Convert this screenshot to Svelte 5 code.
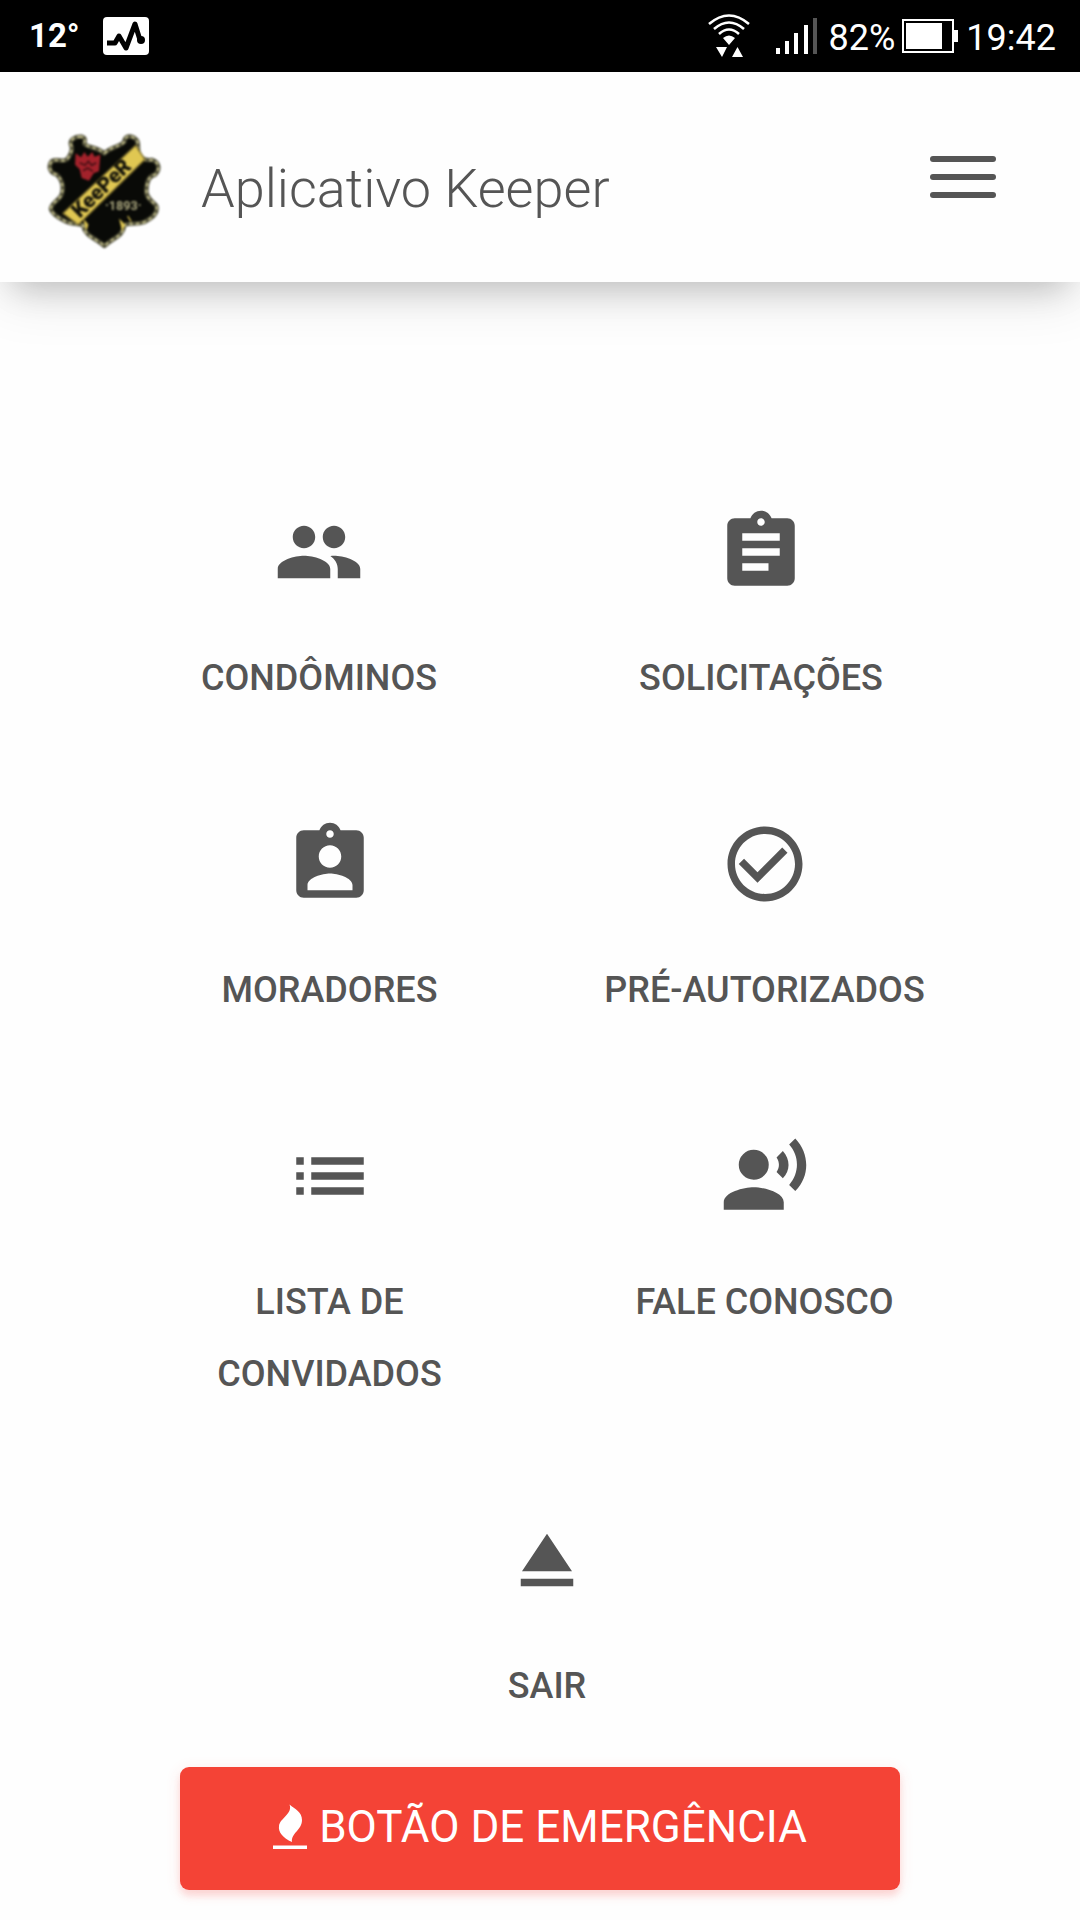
<script>
  const icons = {
    people:
      'M16 11c1.66 0 2.99-1.34 2.99-3S17.66 5 16 5c-1.66 0-3 1.34-3 3s1.34 3 3 3zm-8 0c1.66 0 2.99-1.34 2.99-3S9.66 5 8 5C6.34 5 5 6.34 5 8s1.34 3 3 3zm0 2c-2.33 0-7 1.17-7 3.5V19h14v-2.5c0-2.33-4.67-3.5-7-3.5zm8 0c-.29 0-.62.02-.97.05 1.16.84 1.97 1.97 1.97 3.45V19h6v-2.5c0-2.33-4.67-3.5-7-3.5z',
    assignment:
      'M19 3h-4.18C14.4 1.84 13.3 1 12 1c-1.3 0-2.4.84-2.82 2H5c-1.1 0-2 .9-2 2v14c0 1.1.9 2 2 2h14c1.1 0 2-.9 2-2V5c0-1.1-.9-2-2-2zm-7 0c.55 0 1 .45 1 1s-.45 1-1 1-1-.45-1-1 .45-1 1-1zm2 14H7v-2h7v2zm3-4H7v-2h10v2zm0-4H7V7h10v2z',
    badge:
      'M19 3h-4.18C14.4 1.84 13.3 1 12 1c-1.3 0-2.4.84-2.82 2H5c-1.1 0-2 .9-2 2v14c0 1.1.9 2 2 2h14c1.1 0 2-.9 2-2V5c0-1.1-.9-2-2-2zm-7 0c.55 0 1 .45 1 1s-.45 1-1 1-1-.45-1-1 .45-1 1-1zm0 4c1.66 0 3 1.34 3 3s-1.34 3-3 3-3-1.34-3-3 1.34-3 3-3zm6 12H6v-1.4c0-2 4-3.1 6-3.1s6 1.1 6 3.1V19z',
    check:
      'M16.59 7.58L10 14.17l-3.59-3.58L5 12l5 5 8-8zM12 2C6.48 2 2 6.48 2 12s4.48 10 10 10 10-4.48 10-10S17.52 2 12 2zm0 18c-4.42 0-8-3.58-8-8s3.58-8 8-8 8 3.58 8 8-3.58 8-8 8z',
    list: 'M3 13h2v-2H3v2zm0 4h2v-2H3v2zm0-8h2V7H3v2zm4 4h14v-2H7v2zm0 4h14v-2H7v2zM7 7v2h14V7H7z',
    voice:
      'M9 5a4 4 0 1 0 0 8a4 4 0 1 0 0-8zM9 15c-2.67 0-8 1.34-8 4v2h16v-2c0-2.66-5.33-4-8-4zm7.76-9.64l-1.68 1.69c.84 1.18.84 2.71 0 3.89l1.68 1.69c2.02-2.02 2.02-5.07 0-7.27zM20.07 2l-1.63 1.63c2.77 3.02 2.77 7.56 0 10.74L20.07 16c3.9-3.89 3.91-9.95 0-14z',
    eject: 'M5 17h14v2H5zm7-12L5.33 15h13.34z'
  };

  const rows = [
    { wide: true, items: [['people', 'Condôminos'], ['assignment', 'Solicitações']] },
    { wide: false, items: [['badge', 'Moradores'], ['check', 'Pré-autorizados']] },
    { wide: false, items: [['list', 'Lista de convidados'], ['voice', 'Fale conosco']] },
    { wide: false, items: [['eject', 'Sair']] }
  ];

  const shield =
    'M150 82C132 82 116 90 120 106C126 118 122 132 110 148C98 162 78 146 62 156C50 172 58 192 78 196C96 214 98 236 92 256C84 274 58 282 60 300C66 318 86 326 100 334C122 348 142 340 156 348C164 384 196 386 220 410C246 384 274 384 280 348C296 338 314 348 340 338C364 326 382 310 376 290C364 274 346 268 346 246C346 222 352 200 372 196C388 180 384 158 364 152C346 154 334 152 326 138C314 122 330 98 310 86C292 76 280 84 280 98C264 114 244 110 220 132C196 112 172 116 160 104C160 94 168 86 150 82Z';
</script>

<div class="status">
  <div class="group">
    <span class="temp">12°</span>
    <svg class="pulse" viewBox="0 0 48 40" aria-hidden="true">
      <rect x="1" y="1" width="46" height="38" rx="4" fill="#fff" />
      <path d="M5 27h8l4-7 7 12 9-24 5 16" fill="none" stroke="#000" stroke-width="5" stroke-linejoin="round" />
      <circle cx="39" cy="24" r="4" />
    </svg>
  </div>
  <div class="group">
    <svg class="wifi" viewBox="0 0 42 44" aria-hidden="true">
      <g fill="none" stroke="#fff" stroke-width="2.6">
        <path d="M1 10Q21 -7 41 10" />
        <path d="M6 15Q21 2 36 15" />
        <path d="M11 20Q21 11 31 20" />
      </g>
      <path d="M15 24Q21 19 27 24L21 31zM8 33h11l-5 10zM24 43l5.500-10L35 43z" fill="#fff" />
    </svg>
    <svg class="signal" viewBox="0 0 42 38" aria-hidden="true">
      <path d="M0 31h4v6H0zM9 24h4v13H9zM18 16h4v21h-4zM28 8h4v29h-4z" fill="#fff" />
      <path d="M37 1h4v36h-4z" fill="#555" />
    </svg>
    <span class="reading">82%</span>
    <svg class="battery" viewBox="0 0 56 34" aria-hidden="true">
      <path d="M1 1h50v32H1z" fill="none" stroke="#fff" stroke-width="2" />
      <path d="M4 4h36v26H4zM52 11h4v12h-4z" fill="#fff" />
    </svg>
    <span class="reading">19:42</span>
  </div>
</div>

<header>
  <svg class="logo" viewBox="45 65 345 360" role="img" aria-label="Keeper 1893">
    <path d={shield} fill="#090a07" stroke="#4a4933" stroke-width="13" stroke-linejoin="round" />
    <path d={shield} fill="none" stroke="#c4bf8c" stroke-width="6" stroke-dasharray="12 8" />
    <path d="M134 132l16 12 10-16 10 14 14-14 6 14 18-6-4 50-16 6-14 22-22-8-6-26-14-14z" fill="#a3222b" />
    <path d="M146 160l16 8 10-12 10 12 14-8M156 184l14-8 16 10" fill="none" stroke="#471015" stroke-width="5" />
    <path d="M96 312L314 108L342 150L142 346Z" fill="#e0c752" stroke="#77692b" stroke-width="4" />
    <path d="M160 334l10 12-4 14zM268 334l12 12-6 14zM290 320l10 16" fill="#e0c752" stroke="#e0c752" stroke-width="4" />
    <text transform="translate(146 328) rotate(-44)" font-size="62" font-weight="900" fill="#14130a">KeePeR</text>
    <text x="222" y="303" font-size="38" font-weight="700" fill="#aaa67e">·1893·</text>
  </svg>
  <h1>Aplicativo Keeper</h1>
  <button class="menu" aria-label="Menu"><i></i><i></i><i></i></button>
</header>

<main>
  <nav>
    {#each rows as row}
      <div class="row" class:wide={row.wide}>
        {#each row.items as [icon, label]}
          <a href="#{icon}">
            <svg viewBox="0 0 24 24" aria-hidden="true"><path d={icons[icon]} /></svg>
            <span>{label}</span>
          </a>
        {/each}
      </div>
    {/each}
  </nav>
  <button class="emergency">
    <svg viewBox="0 0 34 46" aria-hidden="true">
      <path d="M16.500 0.500C22 5 29 8 29 16C29 26 18 29 19 38C10 34 5 28 6 22C7 14 20 10 16.500 0.500ZM0 41.500h34v3.500H0z" />
    </svg>
    <span>Botão de emergência</span>
  </button>
</main>

<style>
  :global(body) {
    background: #fefefe;
    font-family: Roboto, sans-serif;
    color: #555;
  }
  svg {
    display: block;
    flex: none;
  }
  .status {
    display: flex;
    justify-content: space-between;
    align-items: center;
    height: 72px;
    padding: 0 24px 0 29px;
    background: #000;
    color: #fff;
    font-size: 36px;
    line-height: 72px;
  }
  .group {
    display: flex;
    align-items: center;
  }
  .temp {
    font-size: 33px;
    font-weight: 700;
  }
  .reading {
    padding-top: 4px;
    line-height: 68px;
  }
  .pulse {
    width: 48px;
    height: 40px;
    margin-left: 22px;
  }
  .wifi {
    width: 42px;
    height: 44px;
    margin-right: 26px;
  }
  .signal {
    width: 42px;
    height: 38px;
    margin-right: 11px;
  }
  .battery {
    width: 56px;
    height: 34px;
    margin: 0 8px 0 7px;
  }
  header {
    display: flex;
    align-items: center;
    box-sizing: border-box;
    height: 210px;
    padding: 8px 84px 8px 46px;
    background: #fefefe;
    box-shadow: 0 12px 54px rgba(0, 0, 0, 0.12), 0 21px 30px -15px rgba(0, 0, 0, 0.18);
  }
  .logo {
    width: 115px;
    height: 120px;
    margin-top: 28px;
    filter: blur(1px);
  }
  h1 {
    flex: 1;
    margin: 24px 0 0 40px;
    font-size: 54px;
    font-weight: 300;
    line-height: 64px;
  }
  .menu {
    display: flex;
    flex-direction: column;
    gap: 12px;
    padding: 0;
    border: 0;
    background: none;
  }
  .menu i {
    width: 66px;
    height: 6px;
    border-radius: 3px;
    background: #555;
  }
  main {
    padding: 225px 98px 30px;
  }
  .row {
    display: flex;
    padding-left: 14px;
    margin-bottom: 105px;
  }
  .row.wide {
    padding-left: 0;
  }
  .row:last-child {
    margin-bottom: 45px;
  }
  .row a {
    display: flex;
    flex: 1 1 0;
    flex-direction: column;
    align-items: center;
    gap: 45px;
    color: #555;
    font-size: 36px;
    font-weight: 500;
    line-height: 72px;
    text-align: center;
    text-decoration: none;
    text-transform: uppercase;
  }
  .row svg {
    width: 90px;
    height: 90px;
    fill: #555;
  }
  .row span {
    max-width: 330px;
  }
  .emergency {
    display: flex;
    justify-content: center;
    align-items: center;
    gap: 12px;
    width: calc(100% - 164px);
    height: 123px;
    margin: 0 auto;
    padding: 0 0 4px;
    border: 0;
    border-radius: 9px;
    background: #f44336;
    color: #fff;
    font: 400 44px/60px Roboto, sans-serif;
    text-transform: uppercase;
    box-shadow: 0 6px 6px rgba(244, 67, 54, 0.14), 0 3px 15px rgba(244, 67, 54, 0.12);
  }
  .emergency svg {
    width: 34px;
    height: 46px;
    fill: #fff;
  }
</style>
